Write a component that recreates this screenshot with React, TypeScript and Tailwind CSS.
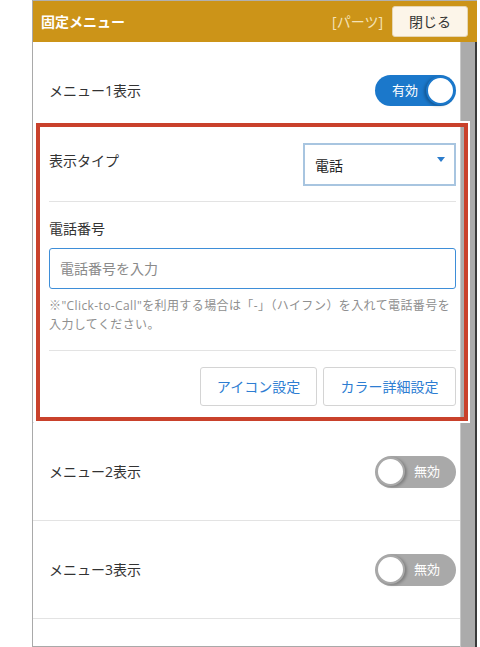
import React from 'react'

const font = "font-['Open_Sans','Noto_Sans_CJK_JP',sans-serif]"

const Toggle = ({ on }: { on: boolean }) =>
  on ? (
    <div className="flex items-center justify-between w-[81px] h-[31px] rounded-full bg-[#1b78cb] pl-[17px] pr-[1px]">
      <span className="text-[13px] text-white leading-none">有効</span>
      <span className="w-[29px] h-[29px] rounded-full bg-white border-2 border-[#1b78cb] shadow-[-2px_1px_3px_rgba(0,0,0,0.25)]" />
    </div>
  ) : (
    <div className="flex items-center justify-between w-[81px] h-[32px] rounded-full bg-[#a9a9a9] pl-[1px] pr-[16px]">
      <span className="w-[29px] h-[29px] rounded-full bg-white border-2 border-[#a9a9a9] shadow-[2px_1px_3px_rgba(0,0,0,0.25)]" />
      <span className="text-[13px] text-white leading-none">無効</span>
    </div>
  )

const MenuRow = ({ label, on }: { label: string; on: boolean }) => (
  <div className="flex items-center justify-between h-[98px] pl-4 pr-1 border-b border-[#e3e3e3]">
    <span className="text-[14px] text-[#333]">{label}</span>
    <Toggle on={on} />
  </div>
)

const App = () => {
  return (
    <div className={`w-[480px] h-[647px] bg-white overflow-hidden ${font}`}>
      <div className="ml-[32px] w-[445px] h-full border-l border-[#a9a9a9] flex flex-col">
        {/* Header */}
        <div className="flex items-center h-[42px] bg-[#cc9418] border-t border-[#b0b0b0] pl-2 pr-[9px] shrink-0">
          <span className="text-[14px] font-bold text-white">固定メニュー</span>
          <span className="ml-auto text-[14px] text-[#f4e2b6]">[パーツ]</span>
          <button className="ml-[9px] w-[76px] h-[31px] rounded-[3px] bg-[#fcf5e9] border border-[#e6d6b3] text-[14px] text-[#333]">
            閉じる
          </button>
        </div>

        <div className="flex flex-1 min-h-0">
          {/* Content */}
          <div className="relative z-10 w-[427px] border-b border-[#a9a9a9]">
            <div className="flex items-start justify-between h-[81px] pl-4 pr-1 pt-[33px]">
              <span className="h-[31px] flex items-center text-[14px] text-[#333]">メニュー1表示</span>
              <Toggle on />
            </div>

            {/* Detail settings */}
            <div className="relative pl-4 pr-1 pt-5 pb-4 border-b border-[#e3e3e3]">
              <div className="flex justify-between items-start">
                <span className="mt-[7px] text-[14px] text-[#333]">表示タイプ</span>
                <div className="relative w-[153px] h-[43px] border-2 border-[#a8c5e0] flex items-center pl-[10px] pt-[2px]">
                  <span className="text-[14px] text-[#222]">電話</span>
                  <span className="absolute right-[9px] top-[12px] w-0 h-0 border-l-[4px] border-r-[4px] border-t-[5px] border-l-transparent border-r-transparent border-t-[#2b7ccc]" />
                </div>
              </div>
              <div className="mt-[15px] border-t border-[#e3e3e3]" />
              <div className="mt-[17px] text-[14px] leading-[20px] text-[#333]">電話番号</div>
              <div className="mt-[9px] h-[41px] border border-[#3e8ed8] rounded-[3px] flex items-center pl-[10px]">
                <span className="text-[14px] text-[#8a8a8a]">電話番号を入力</span>
              </div>
              <div className="mt-[7px] text-[12px] leading-[19px] tracking-[0.4px] text-[#8f8f8f] whitespace-nowrap">
                ※"Click-to-Call"を利用する場合は「-」（ハイフン）を入れて電話番号を
                <br />
                入力してください。
              </div>
              <div className="mt-[16px] border-t border-[#e3e3e3]" />
              <div className="mt-4 flex justify-end gap-[6px]">
                <button className="w-[117px] h-[39px] rounded-[3px] border border-[#d4d4d4] bg-white text-[14px] text-[#2d7dd2]">
                  アイコン設定
                </button>
                <button className="w-[133px] h-[39px] rounded-[3px] border border-[#d4d4d4] bg-white text-[14px] text-[#2d7dd2]">
                  カラー詳細設定
                </button>
              </div>
              {/* annotation frame */}
              <div className="pointer-events-none absolute left-[3px] -right-[8px] top-0 bottom-[1px] border-[4px] border-[#c9412b] outline-2 outline-white" />
            </div>

            <MenuRow label="メニュー2表示" on={false} />
            <MenuRow label="メニュー3表示" on={false} />
          </div>

          {/* Scrollbar */}
          <div className="w-[15px] bg-[#ababab] border-l border-[#c8c8c8]" />
          <div className="w-[2px] bg-[#3a3a3a]" />
        </div>
      </div>
    </div>
  )
}

export default App
